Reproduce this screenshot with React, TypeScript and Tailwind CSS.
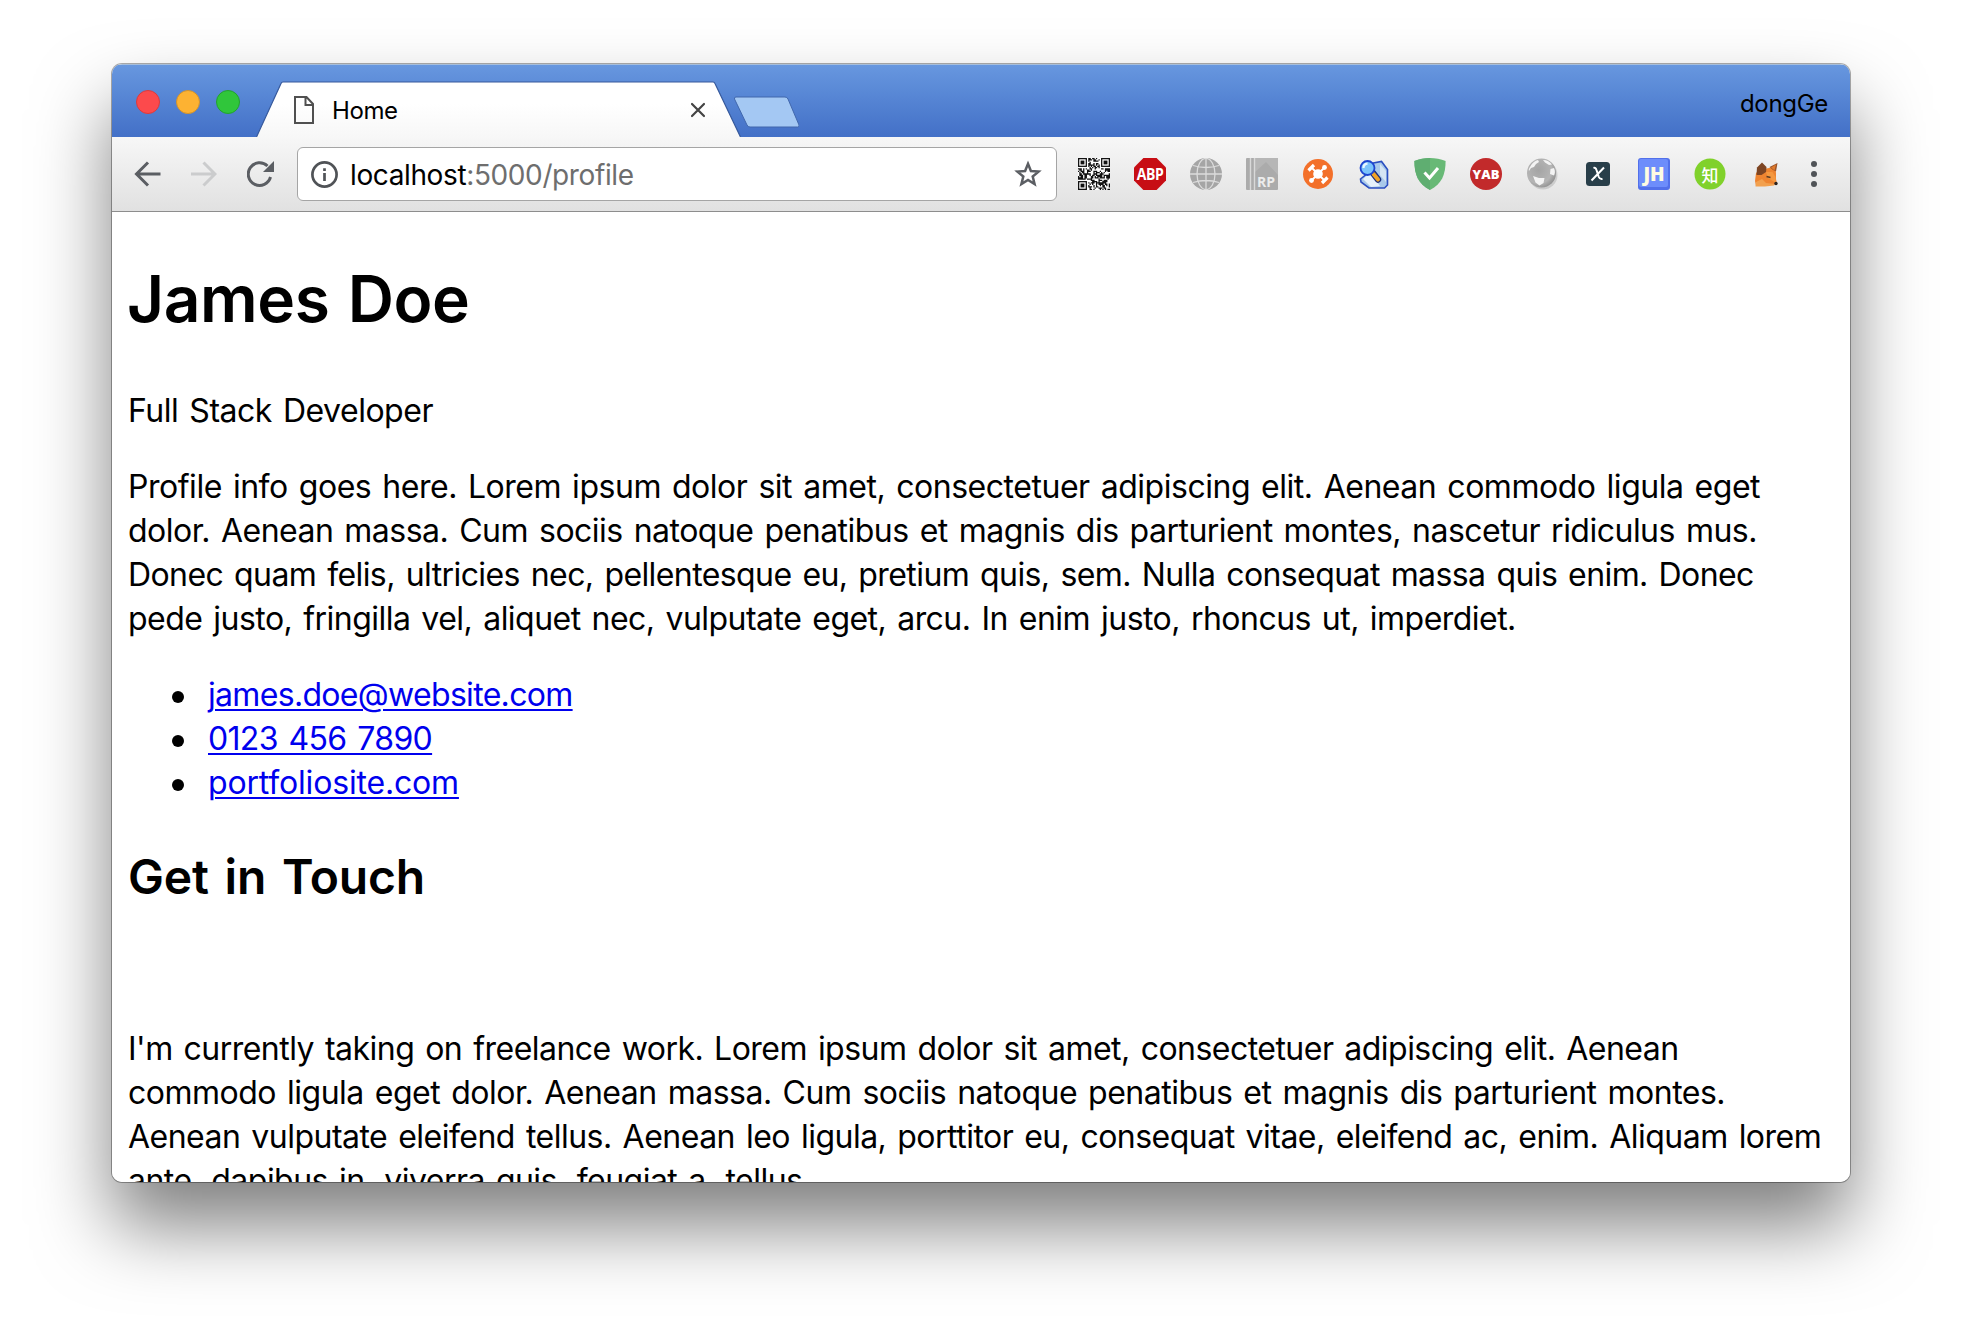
import type { ReactNode } from "react";

const QR_SIZE = 25;

function inFinder(x: number, y: number) {
  const corners = [
    [0, 0],
    [QR_SIZE - 7, 0],
    [0, QR_SIZE - 7],
  ];
  for (const [cx, cy] of corners) {
    if (x >= cx - 1 && x <= cx + 7 && y >= cy - 1 && y <= cy + 7) return true;
  }
  return false;
}

function qrPath() {
  let d = "";
  let seed = 91;
  for (let y = 0; y < QR_SIZE; y++) {
    for (let x = 0; x < QR_SIZE; x++) {
      seed = (seed * 1103515245 + 12345) % 2147483648;
      if (!inFinder(x, y) && (seed >> 12) % 100 < 54) d += `M${x} ${y}h1v1h-1z`;
    }
  }
  return d;
}

const QR = qrPath();

function QrIcon() {
  return (
    <svg className="size-8" viewBox="0 0 25 25">
      <rect width="25" height="25" fill="#fff" />
      <path d={QR} fill="#111" />
      {[
        [0, 0],
        [18, 0],
        [0, 18],
      ].map(([x, y]) => (
        <g key={`${x}-${y}`}>
          <rect x={x + 0.5} y={y + 0.5} width="6" height="6" fill="none" stroke="#111" />
          <rect x={x + 2} y={y + 2} width="3" height="3" fill="#111" />
        </g>
      ))}
    </svg>
  );
}

function Badge({ shape, children }: { shape: ReactNode; children: ReactNode }) {
  return (
    <div className="relative flex size-8 items-center justify-center">
      <svg className="absolute inset-0 size-8" viewBox="0 0 32 32">
        {shape}
      </svg>
      {children}
    </div>
  );
}

function GlobeIcon() {
  return (
    <svg className="size-8" viewBox="0 0 32 32" fill="none" stroke="#dcdcdc" strokeWidth="1.3">
      <circle cx="16" cy="16" r="16" fill="#a5a5a5" stroke="none" />
      <path d="M16 0v32M0 16h32M3 7.5q13 4 26 0M3 24.5q13-4 26 0" />
      <ellipse cx="16" cy="16" rx="9" ry="15.6" />
    </svg>
  );
}

function DroneIcon() {
  return (
    <svg className="size-8" viewBox="0 0 32 32">
      <circle cx="16" cy="16" r="15" fill="#f3702a" />
      <g stroke="#fff" strokeWidth="1.8" strokeLinecap="round">
        <path d="M10 10l12 12M22 10L10 22" />
        <path d="M6.5 12.5l5.5-5.5M20 25l5.5-5.5" strokeWidth="3.2" strokeLinecap="butt" />
      </g>
      <circle cx="16" cy="16" r="4.8" fill="#fff" />
      <circle cx="22.5" cy="9.5" r="2.4" fill="#fff" />
      <circle cx="9.5" cy="22.5" r="2.4" fill="#fff" />
    </svg>
  );
}

function SearchPageIcon() {
  return (
    <svg className="size-8" viewBox="0 0 32 32">
      <path d="M2.500 21l5-4 8-12 8-1.500 6 8v15.500l-3 3H11l-8-6z" fill="#a9c9ea" stroke="#2b4fc0" strokeWidth="1.6" />
      <path d="M5 21l7-6 10 13-9 1z" fill="#e6f1fa" />
      <path d="M22 6l6 7v11l-6-7z" fill="#d5e5f4" />
      <path d="M15 15l5 6.500" stroke="#1c2f7c" strokeWidth="6.500" strokeLinecap="round" />
      <path d="M15.500 16l4.500 5.500" stroke="#f0a325" strokeWidth="4" strokeLinecap="round" />
      <circle cx="9.5" cy="10" r="7" fill="#7cc4fb" stroke="#1d45d0" strokeWidth="1.8" />
      <path d="M5.5 10q0-4 4-4.4" stroke="#e9f7ff" strokeWidth="2.2" fill="none" />
    </svg>
  );
}

function ShieldIcon() {
  return (
    <svg className="size-8" viewBox="0 0 32 32">
      <path d="M16 0c5 0 11 1 15.6 3 0 13-3.600 23-15.600 29C4 26 .4 16 .4 3 5 1 11 0 16 0z" fill="#68b976" />
      <path d="M16 0v32C4 26 .4 16 .4 3 5 1 11 0 16 0z" fill="#5fae71" />
      <path d="M10.500 14.500l5 5.500 8.500-10" fill="none" stroke="#fff" strokeWidth="3" />
    </svg>
  );
}

function SilverGlobeIcon() {
  return (
    <svg className="size-8" viewBox="0 0 32 32">
      <defs>
        <radialGradient id="silver" cx=".4" cy=".4" r=".65">
          <stop offset="0" stopColor="#a4a4a4" />
          <stop offset=".7" stopColor="#b5b5b5" />
          <stop offset="1" stopColor="#8f8f8f" />
        </radialGradient>
      </defs>
      <ellipse cx="17" cy="17" rx="14.500" ry="14.500" fill="#000" opacity=".12" />
      <circle cx="15.500" cy="15" r="14.500" fill="url(#silver)" />
      <path d="M4 9c2-4 5-6.500 8-7l1 2-3 2-2 3-3 1-2 3c-.5-1 0-3 1-4zM17 2c4 0 7 2 9 4.500l-3 .5-4-2.500zM24.500 11l3.500-1c1.500 3 1 5.500 0 7.500l-4-1.500zM7 18l6 2 5.500 0-1 5-4 2.500-4-3z" fill="#f3f3f3" />
    </svg>
  );
}

function FoxIcon() {
  return (
    <svg className="size-8" viewBox="0 0 32 32">
      <path d="M9 12l10-2 6-2 1 7 0 6 1 5-6 1-8 1-7 0-1-5 1-8z" fill="#ee8430" />
      <path d="M6.500 17L7 9.500 12 4.500l4.500 4.500-.5 5-4.500 3z" fill="#7d4523" />
      <path d="M19.500 9L27.500 5 26 13.500 23 12z" fill="#9a5428" />
      <path d="M21 9.500l5-3-1.500 6z" fill="#e07a2c" />
      <path d="M5.500 28.500l.5-4.500 6-3 4 4 9 1-1 1.500-9 1z" fill="#f2a04e" />
      <path d="M16 14l2 6 8 5-.5-6-3-5z" fill="#f5983f" />
      <path d="M16.500 18.500l4 1" stroke="#5b3a22" strokeWidth="1.4" />
      <circle cx="26" cy="25.500" r="1.700" fill="#2b2320" />
    </svg>
  );
}

function Extensions() {
  return (
    <div className="ml-[21px] flex items-center gap-6 font-['Open_Sans'] font-bold text-white">
      <QrIcon />
      <Badge shape={<path d="M9.400 0h13.200L32 9.400v13.200L22.600 32H9.400L0 22.600V9.400z" fill="#c70d14" />}>
        <span className="relative scale-y-120 text-[14px] leading-none tracking-[-0.4px]">ABP</span>
      </Badge>
      <GlobeIcon />
      <Badge
        shape={
          <>
            <rect width="32" height="32" rx="1" fill="#ababab" />
            <path d="M9 14L20 4l12 13V0H9z" fill="#b6b6b6" />
            <path d="M4.500 0v32M8.500 0v32" stroke="#d9d9d9" strokeWidth="1.400" />
          </>
        }
      >
        <span className="relative top-2 left-[4px] text-[14px] leading-none text-[#ececec]">RP</span>
      </Badge>
      <DroneIcon />
      <SearchPageIcon />
      <ShieldIcon />
      <Badge shape={<circle cx="16" cy="16" r="16" fill="#c22a2b" />}>
        <span className="relative text-[13px] leading-none font-extrabold">YAB</span>
      </Badge>
      <SilverGlobeIcon />
      <Badge shape={<rect x="4" y="4" width="24" height="24" rx="3.500" fill="#283e49" />}>
        <svg className="relative size-4" viewBox="0 0 16 16" fill="none" stroke="#fff" strokeWidth="2">
          <path d="M3.500 2q2.200-.8 3 2l2.300 7q1 2.500 3.700 2M14 1.500L1.500 14.500" />
        </svg>
      </Badge>
      <Badge
        shape={
          <>
            <rect width="32" height="32" rx="3" fill="#5270ea" />
            <rect x="1" y="1" width="29" height="28" rx="2" fill="#6d8dfb" />
          </>
        }
      >
        <span className="relative text-[19px] leading-none font-extrabold text-[#fdfbe2]">JH</span>
      </Badge>
      <Badge shape={<circle cx="16" cy="16" r="15.500" fill="#80d12b" />}>
        <span className="relative font-['Noto_Sans_CJK_SC',sans-serif] text-[17px] leading-none font-medium">知</span>
      </Badge>
      <FoxIcon />
      <svg className="size-8" viewBox="0 0 32 32" fill="#505357">
        <circle cx="8" cy="6" r="3" />
        <circle cx="8" cy="16" r="3" />
        <circle cx="8" cy="26" r="3" />
      </svg>
    </div>
  );
}

function TitleBar() {
  return (
    <div className="flex h-[73px] shrink-0 items-end border-t border-[#a6bedb] bg-linear-to-b from-[#6797df] to-[#4370c7]">
      <div className="mb-[23px] ml-6 flex gap-4">
        <div className="size-6 rounded-full border border-[#dd3a3c] bg-[#fc4a4c]" />
        <div className="size-6 rounded-full border border-[#d3922b] bg-[#fdb232]" />
        <div className="size-6 rounded-full border border-[#22a32d] bg-[#30c63b]" />
      </div>
      <div className="relative ml-4 flex h-[56px] w-[486px] items-center">
        <svg className="absolute inset-0 h-[56px] w-[486px]" viewBox="0 0 486 56">
          <defs>
            <linearGradient id="tab" x1="0" y1="0" x2="0" y2="1">
              <stop offset="0" stopColor="#fff" />
              <stop offset=".4" stopColor="#fff" />
              <stop offset="1" stopColor="#f7f7f7" />
            </linearGradient>
          </defs>
          <path d="M.5 56L25 2.500q.6-1.500 2-1.500H457q1.400 0 2 1.500L484.500 56z" fill="url(#tab)" />
          <path d="M.5 56L25 2.500q.6-1.500 2-1.500H457q1.400 0 2 1.500L484.500 56" fill="none" stroke="#36599c" strokeWidth="1.200" />
        </svg>
        <svg className="relative mt-px ml-[38px] h-7 w-5" viewBox="0 0 20 28" fill="none" stroke="#505050" strokeWidth="2">
          <path d="M1 1h11.500L19 8v19H1zM11.500 1v8H19" />
        </svg>
        <span className="relative mt-[3px] ml-[18px] text-[24px] leading-7 tracking-[-0.4px]">Home</span>
        <svg className="relative mt-[2px] mr-[36px] ml-auto size-4" viewBox="0 0 16 16" stroke="#444" strokeWidth="2.200" strokeLinecap="round">
          <path d="M2 2l12 12M14 2L2 14" />
        </svg>
      </div>
      <svg className="mb-[8px] -ml-[9px] h-[33px] w-[66px]" viewBox="0 0 66 33">
        <path d="M3 1h49q2 0 3 2l11 26q.5 2-1.500 2H17q-2 0-3-2L1.500 3Q1 1 3 1z" fill="#a4c8f3" stroke="#4167ac" strokeWidth="1" />
      </svg>
      <span className="mr-[22px] mb-[19px] ml-auto text-[24px] leading-7 tracking-[-0.3px]">dongGe</span>
    </div>
  );
}

function Toolbar() {
  return (
    <div className="flex h-[75px] shrink-0 items-center border-b border-[#8d8d8d] bg-linear-to-b from-[#f7f7f7] to-[#e1e1e1]">
      <div className="ml-[22px] flex items-center">
        <svg className="h-[26px] w-[28px]" viewBox="0 0 28 26" fill="none" stroke="#5b5e63" strokeWidth="3">
          <path d="M26.500 13H3M14 1.500L2.500 13 14 24.500" />
        </svg>
        <svg className="ml-[29px] h-[26px] w-[26px]" viewBox="0 0 26 26" fill="none" stroke="#cbcccd" strokeWidth="3">
          <path d="M0 13h24M12.500 1.500L24 13 12.500 24.500" />
        </svg>
        <svg className="ml-[30px] h-[26px] w-[27px]" viewBox="0 0 27 26">
          <path d="M23.500 16A11.300 11.300 0 1 1 20.500 5" fill="none" stroke="#5b5e63" strokeWidth="3" />
          <path d="M27 0v11H16z" fill="#5b5e63" />
        </svg>
      </div>
      <div className="ml-[23px] flex h-[54px] w-[760px] items-center rounded-md border border-[#a5a5a5] bg-white">
        <svg className="ml-[13px] size-[27px]" viewBox="0 0 27 27" fill="none" stroke="#505357" strokeWidth="2.700">
          <circle cx="13.500" cy="13.500" r="12.100" />
          <path d="M13.500 12v8M13.500 7.300v2.800" />
        </svg>
        <span className="mt-[2px] ml-[12px] text-[28px] leading-8 tracking-[-0.38px]">
          localhost<span className="text-[#6e6e6e]">:5000/profile</span>
        </span>
        <svg className="mr-[13px] ml-auto h-[28px] w-[30px]" viewBox="0 0 30 28" fill="none" stroke="#5b5e63" strokeWidth="2.500" strokeMiterlimit="10">
          <path d="M15 3.800l2.900 7.200 7.700.6-5.900 4.900 1.900 7.600L15 20l-6.600 4.100 1.900-7.600-5.900-4.900 7.700-.6z" />
        </svg>
      </div>
      <Extensions />
    </div>
  );
}

function Line({ className, children }: { className: string; children: ReactNode }) {
  return <span className={`block whitespace-nowrap ${className}`}>{children}</span>;
}

function Contact({ className, children }: { className: string; children: ReactNode }) {
  return (
    <li className="flex items-center">
      <span className="mt-[3px] mr-6 ml-11 size-3 rounded-full bg-black" />
      <a href="#" className={`text-[#0000ee] underline decoration-2 underline-offset-[3px] ${className}`}>
        {children}
      </a>
    </li>
  );
}

function Profile() {
  return (
    <main className="min-h-0 flex-1 overflow-hidden bg-white px-4 pt-[43px] text-[32px] leading-[44px] [word-spacing:2.5px]">
      <h1 className="-ml-px text-[64px] leading-[88px] font-[560] tracking-[-0.4px]">James Doe</h1>
      <p className="mt-[46px] tracking-[-0.48px]">Full Stack Developer</p>
      <p className="mt-8">
        <Line className="tracking-[-0.47px]">Profile info goes here. Lorem ipsum dolor sit amet, consectetuer adipiscing elit. Aenean commodo ligula eget</Line>
        <Line className="tracking-[-0.51px]">dolor. Aenean massa. Cum sociis natoque penatibus et magnis dis parturient montes, nascetur ridiculus mus.</Line>
        <Line className="tracking-[-0.59px]">Donec quam felis, ultricies nec, pellentesque eu, pretium quis, sem. Nulla consequat massa quis enim. Donec</Line>
        <Line className="tracking-[-0.53px]">pede justo, fringilla vel, aliquet nec, vulputate eget, arcu. In enim justo, rhoncus ut, imperdiet.</Line>
      </p>
      <ul className="mt-8">
        <Contact className="tracking-[-0.68px]">james.doe@website.com</Contact>
        <Contact className="tracking-[-0.68px]">0123 456 7890</Contact>
        <Contact className="tracking-[-0.18px]">portfoliosite.com</Contact>
      </ul>
      <h2 className="mt-[39px] text-[48px] leading-[66px] font-[560] tracking-[-0.2px] [word-spacing:4px]">Get in Touch</h2>
      <p className="mt-[117px]">
        <Line className="tracking-[-0.53px]">I'm currently taking on freelance work. Lorem ipsum dolor sit amet, consectetuer adipiscing elit. Aenean</Line>
        <Line className="tracking-[-0.5px]">commodo ligula eget dolor. Aenean massa. Cum sociis natoque penatibus et magnis dis parturient montes.</Line>
        <Line className="tracking-[-0.52px]">Aenean vulputate eleifend tellus. Aenean leo ligula, porttitor eu, consequat vitae, eleifend ac, enim. Aliquam lorem</Line>
        <Line className="tracking-[-0.52px]">ante, dapibus in, viverra quis, feugiat a, tellus.</Line>
      </p>
    </main>
  );
}

export default function App() {
  return (
    <div className="h-[1342px] w-[1962px] overflow-hidden bg-white pt-[64px] pl-[112px] font-[Inter,sans-serif] text-black">
      <div className="flex h-[1118px] w-[1738px] flex-col overflow-hidden rounded-[10px] shadow-[0_0_0_1px_rgba(0,0,0,0.32),0_44px_76px_rgba(0,0,0,0.5)]">
        <TitleBar />
        <Toolbar />
        <Profile />
      </div>
    </div>
  );
}
